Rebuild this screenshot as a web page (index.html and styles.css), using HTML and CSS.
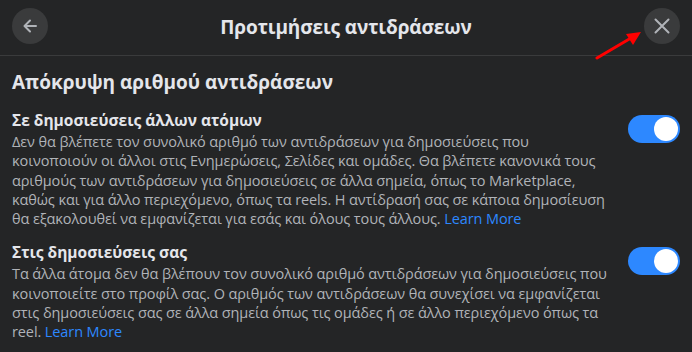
FILE: index.html
```html
<!DOCTYPE html>
<html lang="el">
<head>
    <meta charset="UTF-8">
    <title>Προτιμήσεις αντιδράσεων</title>
    <link rel="stylesheet" href="styles.css">
</head>
<body>
    <div class="dialog">
        <header class="dialog-header">
            <button class="icon-btn" aria-label="Πίσω">
                <svg width="20" height="20" viewBox="0 0 20 20"><path d="M16 10H5M10 4.5 4.5 10 10 15.5" fill="none" stroke="#b0b3b8" stroke-width="2" stroke-linecap="round" stroke-linejoin="round"/></svg>
            </button>
            <h2 class="dialog-title">Προτιμήσεις αντιδράσεων</h2>
            <button class="icon-btn" aria-label="Κλείσιμο">
                <svg width="20" height="20" viewBox="0 0 20 20"><path d="M3.5 3.5l13 13M16.5 3.5l-13 13" fill="none" stroke="#b0b3b8" stroke-width="2" stroke-linecap="round"/></svg>
            </button>
        </header>

        <div class="dialog-body">
            <h3 class="section-title">Απόκρυψη αριθμού αντιδράσεων</h3>

            <div class="setting-row">
                <div class="setting-text">
                    <div class="setting-name">Σε δημοσιεύσεις άλλων ατόμων</div>
                    <p class="setting-desc">Δεν θα βλέπετε τον συνολικό αριθμό των αντιδράσεων για δημοσιεύσεις που<br>κοινοποιούν οι άλλοι στις Ενημερώσεις, Σελίδες και ομάδες. Θα βλέπετε κανονικά τους<br>αριθμούς των αντιδράσεων για δημοσιεύσεις σε άλλα σημεία, όπως το Marketplace,<br>καθώς και για άλλο περιεχόμενο, όπως τα reels. Η αντίδρασή σας σε κάποια δημοσίευση<br>θα εξακολουθεί να εμφανίζεται για εσάς και όλους τους άλλους. <a href="#">Learn More</a></p>
                </div>
                <div class="toggle on"><span class="knob"></span></div>
            </div>

            <div class="setting-row">
                <div class="setting-text">
                    <div class="setting-name">Στις δημοσιεύσεις σας</div>
                    <p class="setting-desc">Τα άλλα άτομα δεν θα βλέπουν τον συνολικό αριθμό αντιδράσεων για δημοσιεύσεις που<br>κοινοποιείτε στο προφίλ σας. Ο αριθμός των αντιδράσεων θα συνεχίσει να εμφανίζεται<br>στις δημοσιεύσεις σας σε άλλα σημεία όπως τις ομάδες ή σε άλλο περιεχόμενο όπως τα<br>reel. <a href="#">Learn More</a></p>
                </div>
                <div class="toggle on"><span class="knob"></span></div>
            </div>
        </div>

        <!-- red annotation arrow pointing at the close button -->
        <svg class="annotation-arrow" width="50" height="32" viewBox="0 0 50 32">
            <path d="M2 29 36 9" stroke="#f00" stroke-width="3" stroke-linecap="round"/>
            <path d="M46 3 31 5 38 16z" fill="#f00"/>
        </svg>
    </div>
</body>
</html>
```

FILE: styles.css
```css
body {
    margin: 0;
    background-color: #242526;
    font-family: "Open Sans", "Noto Sans", sans-serif;
    color: #e4e6eb;
}
.dialog {
    position: relative;
    width: 692px;
    height: 352px;
    overflow: hidden;
    background-color: #242526;
}
.dialog-header {
    display: flex;
    align-items: center;
    justify-content: space-between;
    height: 56px;
    padding: 0 12px;
    border-bottom: 1px solid #3a3b3c;
    box-sizing: border-box;
}
.icon-btn {
    display: flex;
    align-items: center;
    justify-content: center;
    width: 36px;
    height: 36px;
    margin-top: -4px;
    padding: 0;
    border: none;
    border-radius: 50%;
    background-color: #3a3b3c;
    cursor: pointer;
}
.dialog-title {
    margin: 0 0 2px;
    font-size: 19px;
    letter-spacing: -0.1px;
    font-weight: 700;
    color: #e4e6eb;
}
.dialog-body {
    padding: 14px 12px 0;
}
.section-title {
    margin: 0 0 16px;
    font-size: 19px;
    line-height: 24px;
    font-weight: 700;
}
.setting-row {
    display: flex;
    justify-content: space-between;
    align-items: flex-start;
    margin-bottom: 14px;
}
.setting-name {
    margin-bottom: 2px;
    font-size: 15.5px;
    font-weight: 700;
    line-height: 20px;
}
.setting-desc {
    margin: 0;
    font-size: 14.5px;
    letter-spacing: -0.1px;
    line-height: 19.3px;
    color: #b0b3b8;
    white-space: nowrap;
}
.setting-desc a {
    color: #2d88ff;
    text-decoration: none;
}
.toggle {
    position: relative;
    flex-shrink: 0;
    width: 52px;
    height: 28px;
    margin-top: 5px;
    border-radius: 14px;
    background-color: #3e4042;
}
.toggle.on {
    background-color: #2d88ff;
}
.toggle .knob {
    position: absolute;
    top: 2px;
    left: 2px;
    width: 24px;
    height: 24px;
    border-radius: 50%;
    background-color: #fff;
}
.toggle.on .knob {
    left: 26px;
}
.annotation-arrow {
    position: absolute;
    left: 595px;
    top: 29px;
}
```
